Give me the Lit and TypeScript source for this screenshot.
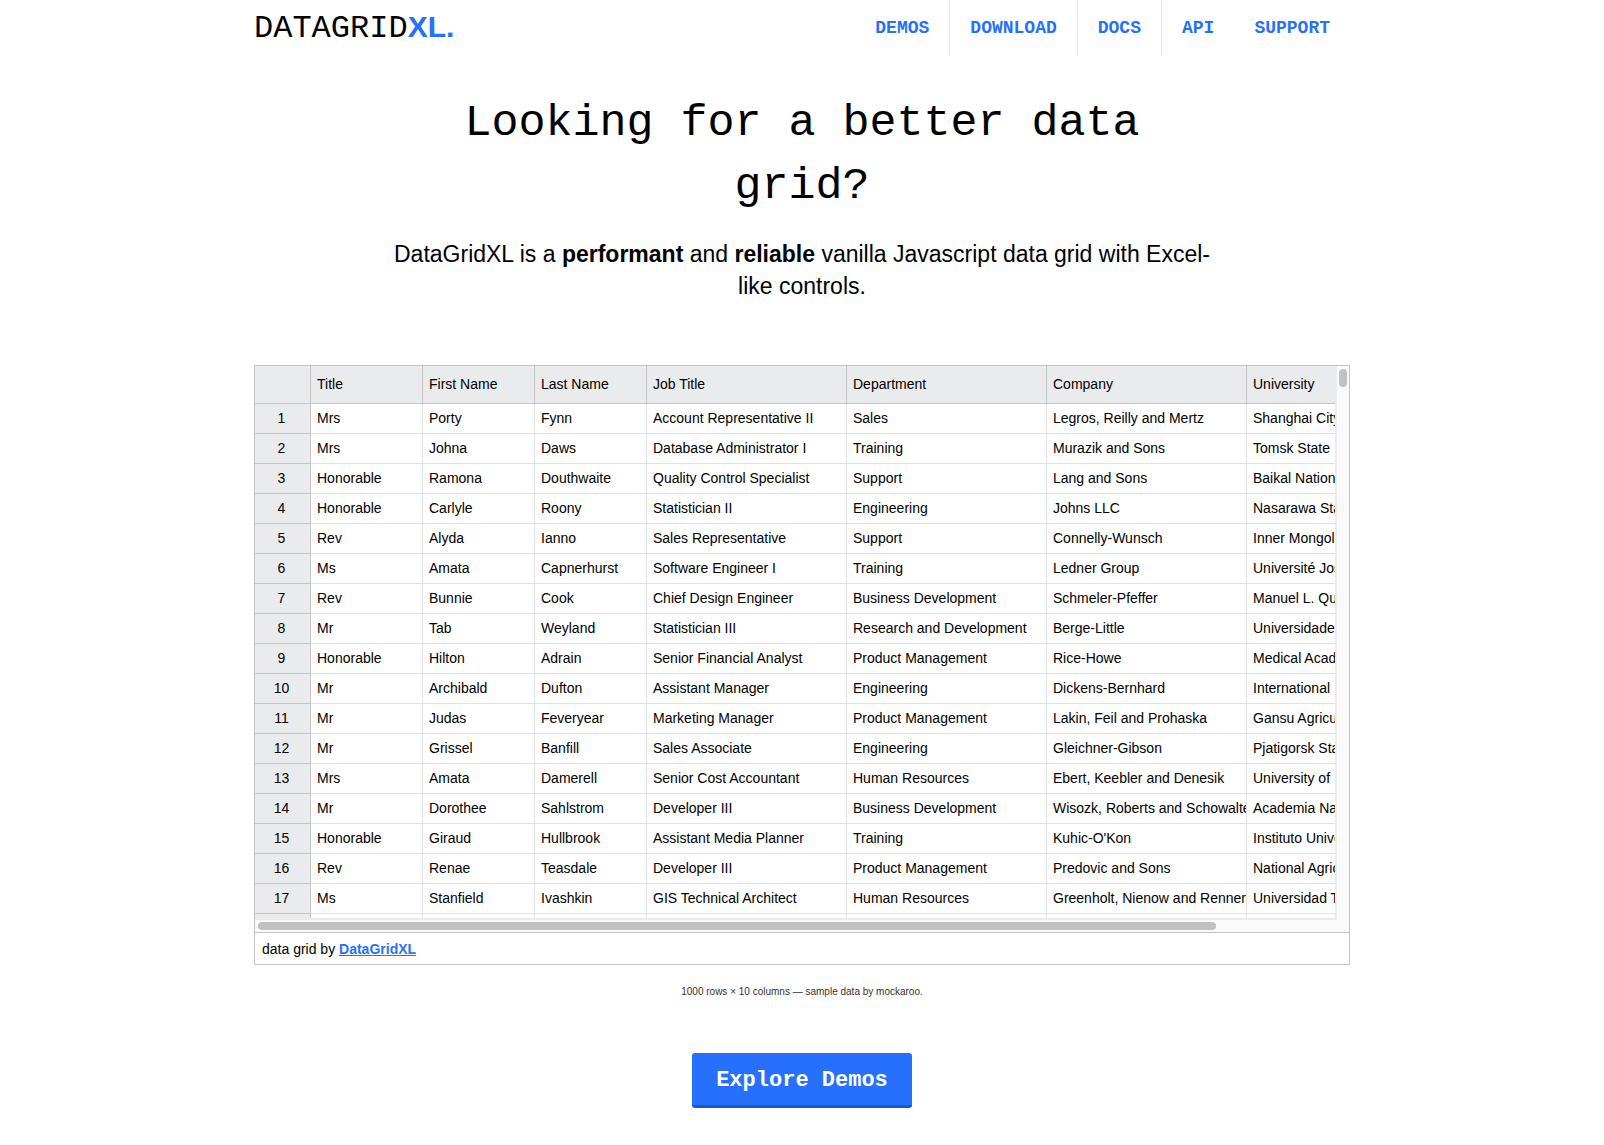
import { LitElement, html, css } from "lit";
import { customElement } from "lit/decorators.js";

const COLUMNS = ["Title", "First Name", "Last Name", "Job Title", "Department", "Company", "University"];

const ROWS: string[][] = [
  ["Mrs", "Porty", "Fynn", "Account Representative II", "Sales", "Legros, Reilly and Mertz", "Shanghai City"],
  ["Mrs", "Johna", "Daws", "Database Administrator I", "Training", "Murazik and Sons", "Tomsk State"],
  ["Honorable", "Ramona", "Douthwaite", "Quality Control Specialist", "Support", "Lang and Sons", "Baikal National"],
  ["Honorable", "Carlyle", "Roony", "Statistician II", "Engineering", "Johns LLC", "Nasarawa State"],
  ["Rev", "Alyda", "Ianno", "Sales Representative", "Support", "Connelly-Wunsch", "Inner Mongolia"],
  ["Ms", "Amata", "Capnerhurst", "Software Engineer I", "Training", "Ledner Group", "Université Joseph"],
  ["Rev", "Bunnie", "Cook", "Chief Design Engineer", "Business Development", "Schmeler-Pfeffer", "Manuel L. Quezon"],
  ["Mr", "Tab", "Weyland", "Statistician III", "Research and Development", "Berge-Little", "Universidade"],
  ["Honorable", "Hilton", "Adrain", "Senior Financial Analyst", "Product Management", "Rice-Howe", "Medical Academy"],
  ["Mr", "Archibald", "Dufton", "Assistant Manager", "Engineering", "Dickens-Bernhard", "International"],
  ["Mr", "Judas", "Feveryear", "Marketing Manager", "Product Management", "Lakin, Feil and Prohaska", "Gansu Agricultural"],
  ["Mr", "Grissel", "Banfill", "Sales Associate", "Engineering", "Gleichner-Gibson", "Pjatigorsk State"],
  ["Mrs", "Amata", "Damerell", "Senior Cost Accountant", "Human Resources", "Ebert, Keebler and Denesik", "University of"],
  ["Mr", "Dorothee", "Sahlstrom", "Developer III", "Business Development", "Wisozk, Roberts and Schowalter", "Academia Nacional"],
  ["Honorable", "Giraud", "Hullbrook", "Assistant Media Planner", "Training", "Kuhic-O'Kon", "Instituto Universitario"],
  ["Rev", "Renae", "Teasdale", "Developer III", "Product Management", "Predovic and Sons", "National Agricultural"],
  ["Ms", "Stanfield", "Ivashkin", "GIS Technical Architect", "Human Resources", "Greenholt, Nienow and Renner", "Universidad Tecnológica"],
];

@customElement("data-grid")
export class DataGrid extends LitElement {
  static styles = css`
    :host {
      display: block;
      border: 1px solid #c3c4c5;
      font-size: 14px;
    }
    .body {
      display: grid;
      grid-template-columns: minmax(0, 1fr) 12px;
      grid-template-rows: auto 12px;
      background: #fafafa;
      border-bottom: 1px solid #c3c4c5;
    }
    .pane {
      overflow: hidden;
      max-height: 554px;
      background: #fff;
      border-right: 2px solid #ebebeb;
      border-bottom: 2px solid #ebebeb;
      box-sizing: border-box;
    }
    table {
      width: 1192px;
      table-layout: fixed;
      border-collapse: separate;
      border-spacing: 0;
    }
    .gutter { width: 56px; }
    .narrow { width: 112px; }
    .wide { width: 200px; }
    th, td {
      box-sizing: border-box;
      height: 30px;
      padding: 0 0 2px 6px;
      border-right: 1px solid #e1e2e3;
      border-bottom: 1px solid #e1e2e3;
      font-weight: 400;
      line-height: 20px;
      text-align: left;
      white-space: nowrap;
      overflow: hidden;
    }
    th {
      background: #eaebed;
      border-color: #c3c4c5;
    }
    thead th { height: 38px; }
    tbody th {
      padding: 0 2px 2px 0;
      text-align: center;
    }
    .track-y {
      display: flex;
      justify-content: center;
      padding: 3px 0;
    }
    .thumb-y {
      width: 8px;
      height: 18px;
      border-radius: 4px;
      background: #c1c1c1;
    }
    .track-x {
      display: flex;
      align-items: center;
      padding: 0 3px;
    }
    .thumb-x {
      width: 89%;
      height: 8px;
      border-radius: 4px;
      background: #c1c1c1;
    }
    .credit {
      padding: 2px 7px 0;
      line-height: 29px;
      background: #fff;
    }
    .credit a {
      color: #2670fb;
      font-weight: 700;
    }
  `;

  render() {
    return html`
      <div class="body">
        <div class="pane">
          <table>
            <colgroup>
              <col class="gutter" />
              ${COLUMNS.map((_, i) => html`<col class=${i < 3 ? "narrow" : "wide"} />`)}
            </colgroup>
            <thead>
              <tr>
                <th></th>
                ${COLUMNS.map((name) => html`<th scope="col">${name}</th>`)}
              </tr>
            </thead>
            <tbody>
              ${ROWS.map(
                (row, i) => html`<tr>
                  <th scope="row">${i + 1}</th>
                  ${row.map((cell) => html`<td>${cell}</td>`)}
                </tr>`
              )}
              <tr>
                <th></th>
                ${COLUMNS.map(() => html`<td></td>`)}
              </tr>
            </tbody>
          </table>
        </div>
        <div class="track-y"><div class="thumb-y"></div></div>
        <div class="track-x"><div class="thumb-x"></div></div>
      </div>
      <div class="credit">data grid by <a href="#">DataGridXL</a></div>
    `;
  }
}

@customElement("app-root")
export class AppRoot extends LitElement {
  static styles = css`
    :host {
      display: block;
      min-height: 100vh;
      background: #fff;
      color: #000;
      font-family: "Liberation Sans", Arial, sans-serif;
    }
    .page {
      max-width: 1096px;
      margin: 0 auto;
    }
    header {
      display: flex;
      justify-content: space-between;
    }
    .logo {
      color: #000;
      font: 32px/54px "Liberation Mono", monospace;
      text-decoration: none;
    }
    .logo b {
      color: #2670fb;
      font: 700 30px/54px "Liberation Sans", Arial, sans-serif;
    }
    nav {
      display: flex;
    }
    nav a {
      padding: 0 20px;
      color: #2670fb;
      font: 700 18px/56px "Liberation Mono", monospace;
      text-decoration: none;
    }
    .ruled {
      border-right: 1px solid #e8e8e8;
    }
    .intro {
      max-width: 822px;
      margin: 0 auto;
      padding: 36px 0 63px;
      text-align: center;
    }
    h1 {
      margin: 0 0 20px;
      font: 400 45px/63px "Liberation Mono", monospace;
    }
    .lead {
      margin: 0;
      font-size: 23px;
      line-height: 32px;
    }
    .note {
      margin: 17px 0 0;
      color: #333;
      font-size: 10px;
      line-height: 20px;
      text-align: center;
    }
    .actions {
      display: flex;
      justify-content: center;
      padding: 51px 0 36px;
    }
    .cta {
      padding: 4px 24px 0;
      border-bottom: 3px solid #1d5ac8;
      border-radius: 3px;
      background: #2670fb;
      color: #fff;
      font: 700 22px/48px "Liberation Mono", monospace;
      text-decoration: none;
    }
  `;

  render() {
    return html`
      <div class="page">
        <header>
          <a class="logo" href="#">DATAGRID<b>XL.</b></a>
          <nav>
            <a class="ruled" href="#">DEMOS</a>
            <a class="ruled" href="#">DOWNLOAD</a>
            <a class="ruled" href="#">DOCS</a>
            <a href="#">API</a>
            <a href="#">SUPPORT</a>
          </nav>
        </header>
        <main>
          <section class="intro">
            <h1>Looking for a better data grid?</h1>
            <p class="lead">
              DataGridXL is a <strong>performant</strong> and <strong>reliable</strong> vanilla
              Javascript data grid with Excel-like controls.
            </p>
          </section>
          <data-grid></data-grid>
          <p class="note">1000 rows × 10 columns — sample data by mockaroo.</p>
          <div class="actions"><a class="cta" href="#">Explore Demos</a></div>
        </main>
      </div>
    `;
  }
}
